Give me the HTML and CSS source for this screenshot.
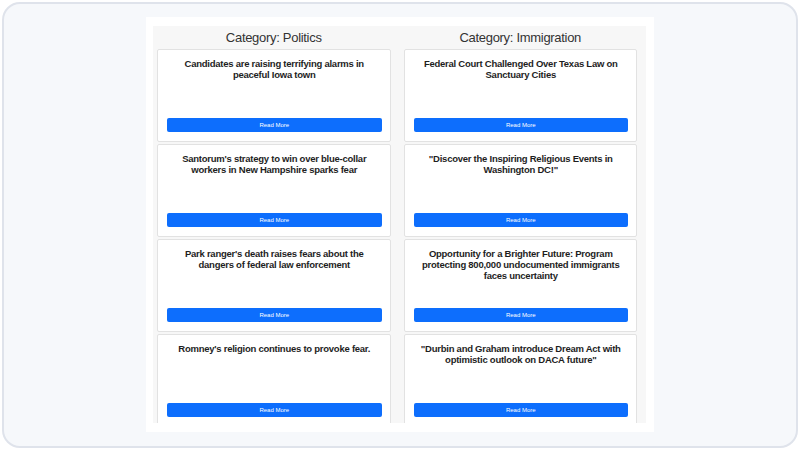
FILE: index.html
```html
<!DOCTYPE html>
<html lang="en">
<head>
  <meta charset="UTF-8">
  <meta name="viewport" content="width=device-width, initial-scale=1.0">
  <title>News by Category</title>
  <link rel="stylesheet" href="styles.css">
</head>
<body>

  <div class="frame">
    <div class="panel">
      <div class="categories">

        <!-- Politics column -->
        <div class="category">
          <h2>Category: Politics</h2>
          <div class="card">
            <h3>Candidates are raising terrifying alarms in peaceful Iowa town</h3>
            <button class="read-btn">Read More</button>
          </div>
          <div class="card">
            <h3>Santorum's strategy to win over blue-collar workers in New Hampshire sparks fear</h3>
            <button class="read-btn">Read More</button>
          </div>
          <div class="card">
            <h3>Park ranger's death raises fears about the dangers of federal law enforcement</h3>
            <button class="read-btn">Read More</button>
          </div>
          <div class="card">
            <h3>Romney's religion continues to provoke fear.</h3>
            <button class="read-btn">Read More</button>
          </div>
        </div>

        <!-- Immigration column -->
        <div class="category">
          <h2>Category: Immigration</h2>
          <div class="card">
            <h3>Federal Court Challenged Over Texas Law on Sanctuary Cities</h3>
            <button class="read-btn">Read More</button>
          </div>
          <div class="card">
            <h3>"Discover the Inspiring Religious Events in Washington DC!"</h3>
            <button class="read-btn">Read More</button>
          </div>
          <div class="card">
            <h3>Opportunity for a Brighter Future: Program protecting 800,000 undocumented immigrants faces uncertainty</h3>
            <button class="read-btn">Read More</button>
          </div>
          <div class="card">
            <h3>"Durbin and Graham introduce Dream Act with optimistic outlook on DACA future"</h3>
            <button class="read-btn">Read More</button>
          </div>
        </div>

      </div>
    </div>
  </div>

</body>
</html>
```

FILE: styles.css
```css
/* Global styles */
body {
  font-family: "Liberation Sans", Arial, sans-serif;
  background-color: #ffffff;
  margin: 0;
  padding: 0;
}

/* Outer rounded frame */
.frame {
  box-sizing: border-box;
  margin: 2px;
  height: 446px;
  border: 2px solid #dfe3eb;
  border-radius: 18px;
  background-color: #f6f8fb;
  padding-top: 13px;
  overflow: hidden;
}

/* White page area */
.panel {
  width: 493px;
  margin: 0 auto;
  padding: 9px 8px 9px 7px;
  background-color: #ffffff;
}

/* Two category columns */
.categories {
  display: flex;
  height: 397px;
  overflow: hidden;
  background-color: #f7f7f7;
}

.category {
  flex: 1;
  padding: 0 9px 0 4px;
}

.category h2 {
  margin: 0;
  font-size: 13px;
  font-weight: normal;
  letter-spacing: -0.3px;
  line-height: 23px;
  text-align: center;
  color: #333;
}

/* News cards */
.card {
  box-sizing: border-box;
  height: 93px;
  margin-bottom: 2px;
  padding: 8px 8px 9px 9px;
  background-color: #ffffff;
  border: 1px solid #e2e2e2;
  border-radius: 2px;
  display: flex;
  flex-direction: column;
}

.card h3 {
  margin: 0;
  font-size: 9.5px;
  font-weight: bold;
  letter-spacing: -0.25px;
  line-height: 11px;
  text-align: center;
  color: #1e1e1e;
}

/* Read more button */
.read-btn {
  margin-top: auto;
  height: 14px;
  padding: 0;
  font-family: inherit;
  font-size: 6px;
  color: #ffffff;
  background-color: #0d6efd;
  border: none;
  border-radius: 2px;
  cursor: pointer;
}
```
